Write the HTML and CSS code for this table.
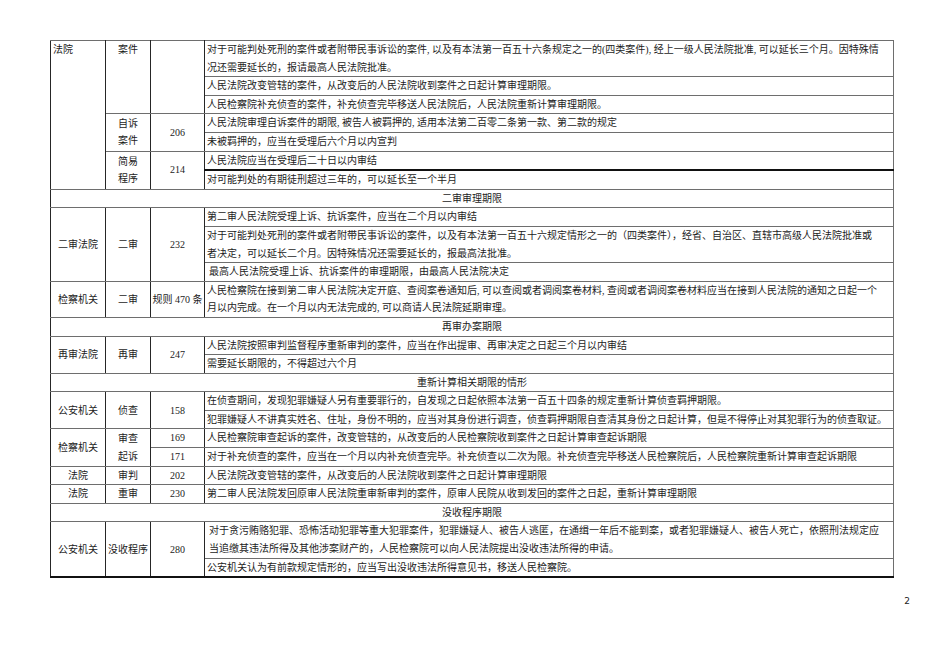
FILE: index.html
```html
<!DOCTYPE html>
<html lang="zh-CN">
<head>
<meta charset="utf-8">
<title>刑事诉讼期限</title>
<link rel="stylesheet" href="styles.css">
</head>
<body>
<div class="page">
  <table class="limits">
    <colgroup>
      <col class="c-org">
      <col class="c-stage">
      <col class="c-art">
      <col class="c-text">
    </colgroup>
    <tbody>
      <tr>
        <td rowspan="7" class="org org-top">法院</td>
        <td rowspan="3" class="stage stage-top">案件</td>
        <td rowspan="3" class="art"></td>
        <td class="text">对于可能判处死刑的案件或者附带民事诉讼的案件, 以及有本法第一百五十六条规定之一的(四类案件), 经上一级人民法院批准, 可以延长三个月。因特殊情<br>况还需要延长的，报请最高人民法院批准。</td>
      </tr>
      <tr><td class="text">人民法院改变管辖的案件，从改变后的人民法院收到案件之日起计算审理期限。</td></tr>
      <tr><td class="text">人民检察院补充侦查的案件，补充侦查完毕移送人民法院后，人民法院重新计算审理期限。</td></tr>
      <tr>
        <td rowspan="2" class="stage">自诉<br>案件</td>
        <td rowspan="2" class="art">206</td>
        <td class="text">人民法院审理自诉案件的期限, 被告人被羁押的, 适用本法第二百零二条第一款、第二款的规定</td>
      </tr>
      <tr><td class="text">未被羁押的，应当在受理后六个月以内宣判</td></tr>
      <tr>
        <td rowspan="2" class="stage">简易<br>程序</td>
        <td rowspan="2" class="art">214</td>
        <td class="text">人民法院应当在受理后二十日以内审结</td>
      </tr>
      <tr><td class="text thick-top">对可能判处的有期徒刑超过三年的，可以延长至一个半月</td></tr>

      <tr><td colspan="4" class="section">二审审理期限</td></tr>
      <tr>
        <td rowspan="3" class="org">二审法院</td>
        <td rowspan="3" class="stage">二审</td>
        <td rowspan="3" class="art">232</td>
        <td class="text">第二审人民法院受理上诉、抗诉案件，应当在二个月以内审结</td>
      </tr>
      <tr><td class="text">对于可能判处死刑的案件或者附带民事诉讼的案件，以及有本法第一百五十六规定情形之一的（四类案件），经省、自治区、直辖市高级人民法院批准或<br>者决定，可以延长二个月。因特殊情况还需要延长的，报最高法批准。</td></tr>
      <tr><td class="text indent">最高人民法院受理上诉、抗诉案件的审理期限，由最高人民法院决定</td></tr>
      <tr>
        <td class="org">检察机关</td>
        <td class="stage">二审</td>
        <td class="art">规则 470 条</td>
        <td class="text">人民检察院在接到第二审人民法院决定开庭、查阅案卷通知后, 可以查阅或者调阅案卷材料, 查阅或者调阅案卷材料应当在接到人民法院的通知之日起一个<br>月以内完成。在一个月以内无法完成的, 可以商请人民法院延期审理。</td>
      </tr>

      <tr><td colspan="4" class="section">再审办案期限</td></tr>
      <tr>
        <td rowspan="2" class="org">再审法院</td>
        <td rowspan="2" class="stage">再审</td>
        <td rowspan="2" class="art">247</td>
        <td class="text">人民法院按照审判监督程序重新审判的案件，应当在作出提审、再审决定之日起三个月以内审结</td>
      </tr>
      <tr><td class="text">需要延长期限的，不得超过六个月</td></tr>

      <tr><td colspan="4" class="section">重新计算相关期限的情形</td></tr>
      <tr>
        <td rowspan="2" class="org">公安机关</td>
        <td rowspan="2" class="stage">侦查</td>
        <td rowspan="2" class="art">158</td>
        <td class="text">在侦查期间，发现犯罪嫌疑人另有重要罪行的，自发现之日起依照本法第一百五十四条的规定重新计算侦查羁押期限。</td>
      </tr>
      <tr><td class="text">犯罪嫌疑人不讲真实姓名、住址，身份不明的，应当对其身份进行调查，侦查羁押期限自查清其身份之日起计算，但是不得停止对其犯罪行为的侦查取证。</td></tr>
      <tr>
        <td rowspan="2" class="org">检察机关</td>
        <td rowspan="2" class="stage">审查<br>起诉</td>
        <td class="art">169</td>
        <td class="text">人民检察院审查起诉的案件，改变管辖的，从改变后的人民检察院收到案件之日起计算审查起诉期限</td>
      </tr>
      <tr>
        <td class="art">171</td>
        <td class="text">对于补充侦查的案件，应当在一个月以内补充侦查完毕。补充侦查以二次为限。补充侦查完毕移送人民检察院后，人民检察院重新计算审查起诉期限</td>
      </tr>
      <tr>
        <td class="org">法院</td>
        <td class="stage">审判</td>
        <td class="art">202</td>
        <td class="text">人民法院改变管辖的案件，从改变后的人民法院收到案件之日起计算审理期限</td>
      </tr>
      <tr>
        <td class="org">法院</td>
        <td class="stage">重审</td>
        <td class="art">230</td>
        <td class="text">第二审人民法院发回原审人民法院重审新审判的案件，原审人民院从收到发回的案件之日起，重新计算审理期限</td>
      </tr>

      <tr><td colspan="4" class="section">没收程序期限</td></tr>
      <tr class="last-group">
        <td rowspan="2" class="org">公安机关</td>
        <td rowspan="2" class="stage">没收程序</td>
        <td rowspan="2" class="art">280</td>
        <td class="text indent">对于贪污贿赂犯罪、恐怖活动犯罪等重大犯罪案件，犯罪嫌疑人、被告人逃匿，在通缉一年后不能到案，或者犯罪嫌疑人、被告人死亡，依照刑法规定应<br>当追缴其违法所得及其他涉案财产的，人民检察院可以向人民法院提出没收违法所得的申请。</td>
      </tr>
      <tr class="last-row"><td class="text">公安机关认为有前款规定情形的，应当写出没收违法所得意见书，移送人民检察院。</td></tr>
    </tbody>
  </table>
  <div class="page-no">2</div>
</div>
</body>
</html>
```
FILE: styles.css
```css
html, body {
  margin: 0;
  padding: 0;
  background: #ffffff;
}

.page {
  width: 950px;
  height: 672px;
  box-sizing: border-box;
  padding: 40px 0 0 50px;
  font-family: "Liberation Serif", "Noto Sans CJK SC", serif;
  color: #1c1c1c;
}

.limits {
  width: 843px;
  table-layout: fixed;
  border-collapse: collapse;
  font-size: 10px;
  line-height: 17.6px;
}

.c-org { width: 55px; }
.c-stage { width: 45px; }
.c-art { width: 54px; }
.c-text { width: 689px; }

.limits td {
  padding: 0;
  border-top: 1px solid #6e6e6e;
  border-bottom: 1px solid #6e6e6e;
  border-left: 1px solid #262626;
  border-right: 1px solid #6e6e6e;
  vertical-align: middle;
  white-space: nowrap;
  overflow: hidden;
}

.limits .org,
.limits .stage,
.limits .art {
  text-align: center;
  border-right-color: #262626;
}

.limits .org-top {
  text-align: left;
  vertical-align: top;
  padding-left: 2px;
}

.limits .stage-top {
  vertical-align: top;
}

.limits .text {
  text-align: left;
  padding-left: 2px;
  border-right-color: #6e6e6e;
}

.limits .indent {
  padding-left: 4px;
}

.limits .thick-top {
  border-top: 2px solid #111;
}

.limits .section {
  text-align: center;
  border-left-color: #262626;
}

.limits .last-group td,
.limits .last-row td {
  border-bottom: 2px solid #111;
}

.limits .last-group td.text {
  border-bottom: 1px solid #6e6e6e;
}

.page-no {
  width: 860px;
  margin-top: 18px;
  text-align: right;
  font-family: "DejaVu Sans", sans-serif;
  font-size: 9px;
  color: #222;
}
```
